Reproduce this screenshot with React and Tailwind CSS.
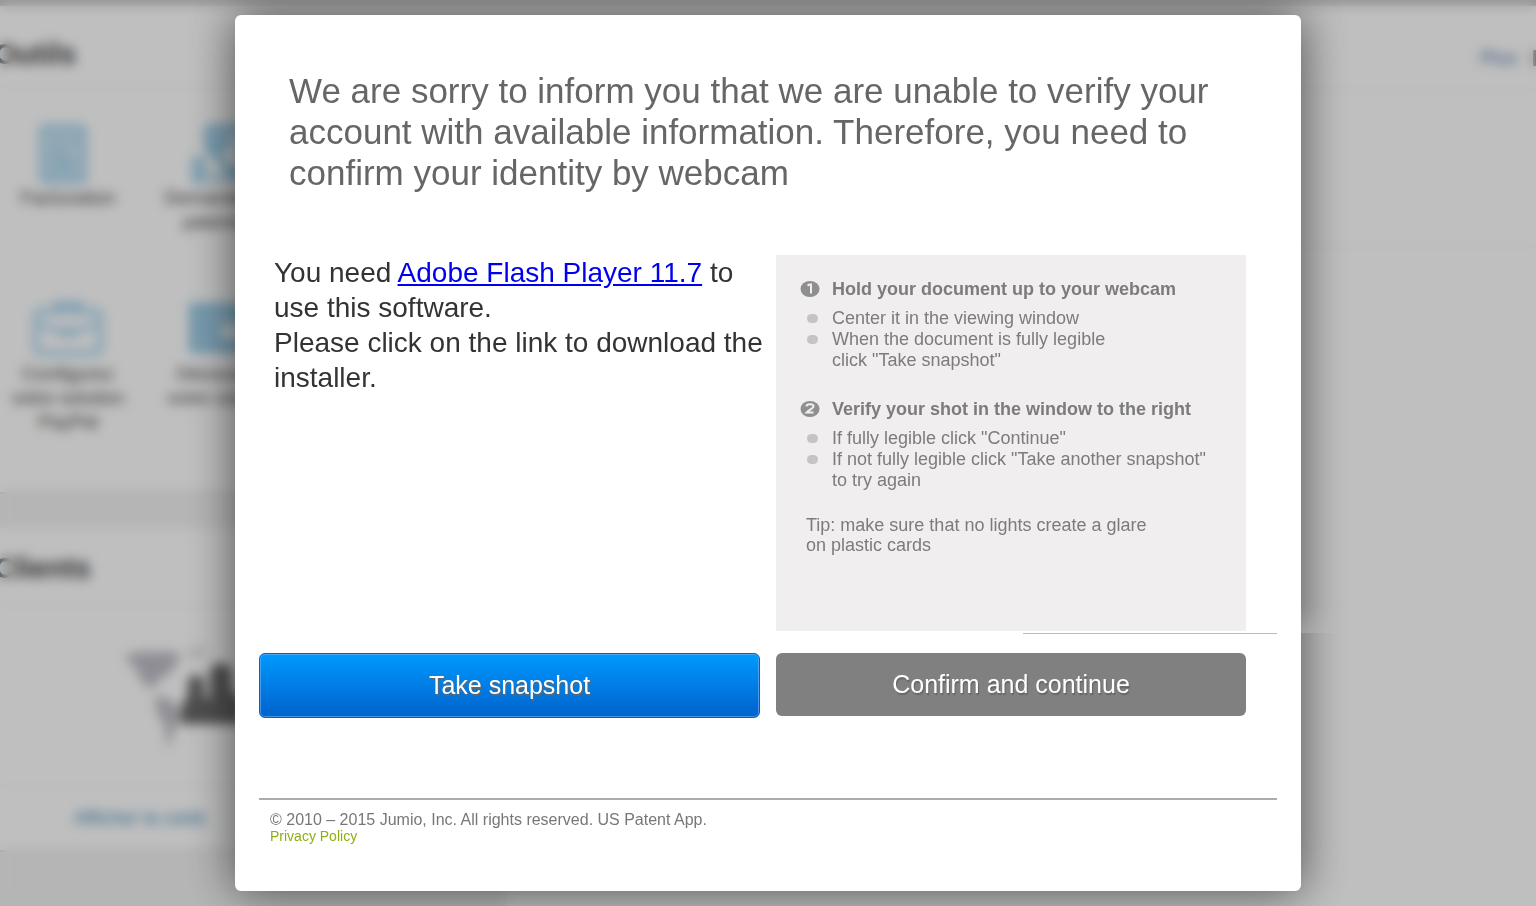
import React from 'react';

const steps = [
    {
        title: 'Hold your document up to your webcam',
        items: [
            ['Center it in the viewing window'],
            ['When the document is fully legible', 'click "Take snapshot"'],
        ],
    },
    {
        title: 'Verify your shot in the window to the right',
        items: [
            ['If fully legible click "Continue"'],
            ['If not fully legible click "Take another snapshot"', 'to try again'],
        ],
    },
];

function InvoiceIcon() {
    return (
        <svg width="58" height="60" viewBox="0 0 58 60" fill="none" stroke="#9ccfeb" strokeWidth="5" aria-hidden="true">
            <rect x="3" y="3" width="42" height="54" rx="3" fill="#d3e9f5" />
            <path d="M12 16h14M12 28h16M12 37h24M12 46h24M34 12v10" />
        </svg>
    );
}

function RequestIcon() {
    return (
        <svg width="66" height="60" viewBox="0 0 66 60" fill="none" stroke="#74bce2" strokeWidth="6" aria-hidden="true">
            <path d="M19 4h36v42M19 4v18l24 26h12" />
            <circle cx="34" cy="18" r="6" />
            <path d="M6 36h8v20H6zM20 54h34" stroke="#9ccfeb" />
        </svg>
    );
}

function BriefcaseIcon() {
    return (
        <svg width="70" height="60" viewBox="0 0 70 60" fill="none" stroke="#9ccfeb" strokeWidth="5" aria-hidden="true">
            <rect x="3" y="11" width="64" height="42" rx="4" />
            <path d="M23 10V4h24v6M8 24l20 8h14l20-8M35 26v12" />
        </svg>
    );
}

function CardIcon() {
    return (
        <svg width="66" height="60" viewBox="0 0 66 60" aria-hidden="true">
            <rect y="3" width="66" height="50" rx="3" fill="#98cbe7" />
            <path d="M32 25h26v14H32z" fill="#f2f8fb" />
            <path d="M6 18h42M8 32h14M8 42h14" stroke="#c4e2f2" strokeWidth="3" />
        </svg>
    );
}

function MapIcon() {
    return (
        <svg width="150" height="110" viewBox="0 0 150 110" aria-hidden="true">
            <path d="M-4 10l18-4 36 0 4 8-12 14-12 8-3 8-11-8-6-14z" fill="#bdbdc6" />
            <path d="M58 6l20-5 4 6-16 5z" fill="#dcdce0" />
            <path d="M30 50l12 2 12 12-3 12-9 28-4-26-8-14z" fill="#bdbdc6" />
            <g fill="#6a6868">
                <path d="M62 34q8-10 16 0v16l6 3V24q10-14 22 0v20l10 8v26H54q0-22 8-28z" />
            </g>
        </svg>
    );
}

function Tool({ icon, lines }) {
    return (
        <div className="flex flex-col items-center gap-0.5">
            {icon}
            <div className="text-center text-[19px] leading-6">
                {lines.map((line) => (
                    <div key={line}>{line}</div>
                ))}
            </div>
        </div>
    );
}

function AccountPage() {
    return (
        <div className="absolute inset-0 overflow-hidden bg-[#f2f2f2] text-[#444] border-t-[6px] border-[#c8c8c8]" aria-hidden="true">
            <div className="flex h-full">
                <div className="w-1/3 shrink-0 -ml-1.5">
                    <section className="bg-white h-[488px] border-b-2 border-[#ddd]">
                        <h2 className="h-[82px] pt-8 text-[29px] leading-8 font-bold border-b border-[#f4f4f4]">Outils</h2>
                        <div className="grid grid-cols-[148px_160px] gap-y-[66px] pt-9">
                            <Tool icon={<InvoiceIcon />} lines={['Facturation']} />
                            <Tool icon={<RequestIcon />} lines={['Demander un', 'paiement']} />
                            <Tool icon={<BriefcaseIcon />} lines={['Configurez', 'votre solution', 'PayPal']} />
                            <Tool icon={<CardIcon />} lines={['Découvrez', 'votre compte']} />
                        </div>
                    </section>
                    <section className="bg-white mt-[34px] h-[324px] border-b-2 border-[#ddd]">
                        <h2 className="h-[78px] pt-6 text-[29px] leading-8 font-bold border-b border-[#f4f4f4]">Clients</h2>
                        <div className="pl-[132px] pt-10 h-[180px] border-b border-[#f4f4f4]"><MapIcon /></div>
                        <div className="pl-20 pt-4 text-[19px] leading-8 text-[#3b88b8]">Afficher la carte</div>
                    </section>
                </div>
                <section className="grow bg-white">
                    <div className="flex justify-end gap-4 h-[84px] pt-9 text-[19px] leading-8 border-b border-[#f4f4f4]">
                        <span className="text-[#4a70a8]">Plus</span>
                        <span className="w-[3px] h-4 mt-2 bg-[#777]" />
                    </div>
                    <div className="h-[157px] border-b border-[#f4f4f4]" />
                </section>
            </div>
        </div>
    );
}

function StepNumber({ n }) {
    return (
        <svg className="shrink-0" width="20" height="18" viewBox="0 0 20 18" aria-hidden="true">
            <ellipse cx="10" cy="8" rx="9.5" ry="8" fill="#8f8f8f" />
            {n === 1 ? (
                <path d="M7.5 4.5l2-1h1.5v9" fill="none" stroke="#f0eeef" strokeWidth="2" />
            ) : (
                <path d="M6.5 5.5c0-3 7-3 7 0 0 2-5 3.5-7 6h7" fill="none" stroke="#f0eeef" strokeWidth="2" />
            )}
        </svg>
    );
}

function Instructions() {
    return (
        <div className="bg-[#f0eeef] pt-6 pb-[76px] pl-6 text-[18px] leading-[21px] text-[#7c7c7c]">
            <div className="space-y-7">
                {steps.map((step, i) => (
                    <section key={step.title}>
                        <h2 className="flex items-center gap-3 mb-2 font-bold whitespace-nowrap">
                            <StepNumber n={i + 1} />
                            {step.title}
                        </h2>
                        <ul>
                            {step.items.map((lines) => (
                                <li key={lines[0]} className="flex gap-3.5 pl-[7px] whitespace-nowrap">
                                    <span className="w-[11px] h-[9px] mt-1.5 rounded-full bg-[#c4c4c2]" />
                                    <span>
                                        {lines.map((line) => (
                                            <span key={line} className="block">{line}</span>
                                        ))}
                                    </span>
                                </li>
                            ))}
                        </ul>
                    </section>
                ))}
            </div>
            <p className="mt-6 pl-[6px] leading-5">
                Tip: make sure that no lights create a glare
                <br />
                on plastic cards
            </p>
        </div>
    );
}

export default function App() {
    return (
        <div className="relative min-h-screen overflow-hidden font-['Liberation_Sans',Arial,sans-serif]">
            <AccountPage />
            <div className="relative min-h-screen py-[15px] bg-black/25 backdrop-blur-[6px]">
                <main className="relative w-full max-w-[1066px] mx-auto px-6 pt-[55px] pb-[46px] bg-white rounded-md shadow-[0_0_48px_rgba(0,0,0,0.6)]">
                    <div className="absolute left-full top-[590px] w-9 h-7 bg-linear-to-b from-transparent to-[#bcbcbc]/40" />
                    <h1 className="px-[30px] text-[35px] leading-[41px] text-[#666]">
                        We are sorry to inform you that we are unable to verify your account with available information. Therefore, you need to confirm your identity by webcam
                    </h1>
                    <div className="grid grid-cols-[501fr_470fr] gap-x-4 mt-[62px] pr-[31px]">
                        <p className="pl-[15px] -mr-3 text-[28px] leading-[35px] text-[#333]">
                            You need <a href="#flash" className="text-[#0000ee] underline">Adobe Flash Player 11.7</a> to
                            <br />
                            use this software.
                            <br />
                            Please click on the link to download the installer.
                        </p>
                        <Instructions />
                    </div>
                    <div className="mt-0.5 ml-auto w-1/4 h-px bg-[#bbb]" />
                    <div className="grid grid-cols-[501fr_470fr] items-start gap-x-4 mt-[19px] pr-[31px] text-[25px] text-white">
                        <button
                            type="button"
                            className="h-[65px] rounded-md border border-[#0060c8] bg-linear-to-b from-[#0099ff] to-[#0062cc] shadow-[inset_0_0_0_1px_rgba(120,180,240,0.6)] [text-shadow:1px_2px_1px_#666]"
                        >
                            Take snapshot
                        </button>
                        <button type="button" className="h-[63px] rounded-md bg-[#808080] [text-shadow:1px_2px_1px_#666]">
                            Confirm and continue
                        </button>
                    </div>
                    <hr className="mt-[80px] border-t-2 border-[#acacac]" />
                    <footer className="pt-[11px] pl-[11px] text-[16px] leading-[17px] text-[#777]">
                        <p>© 2010 – 2015 Jumio, Inc. All rights reserved. US Patent App.</p>
                        <a href="#privacy" className="block text-[14px] leading-[17px] text-[#8db10c]">Privacy Policy</a>
                    </footer>
                </main>
            </div>
        </div>
    );
}
